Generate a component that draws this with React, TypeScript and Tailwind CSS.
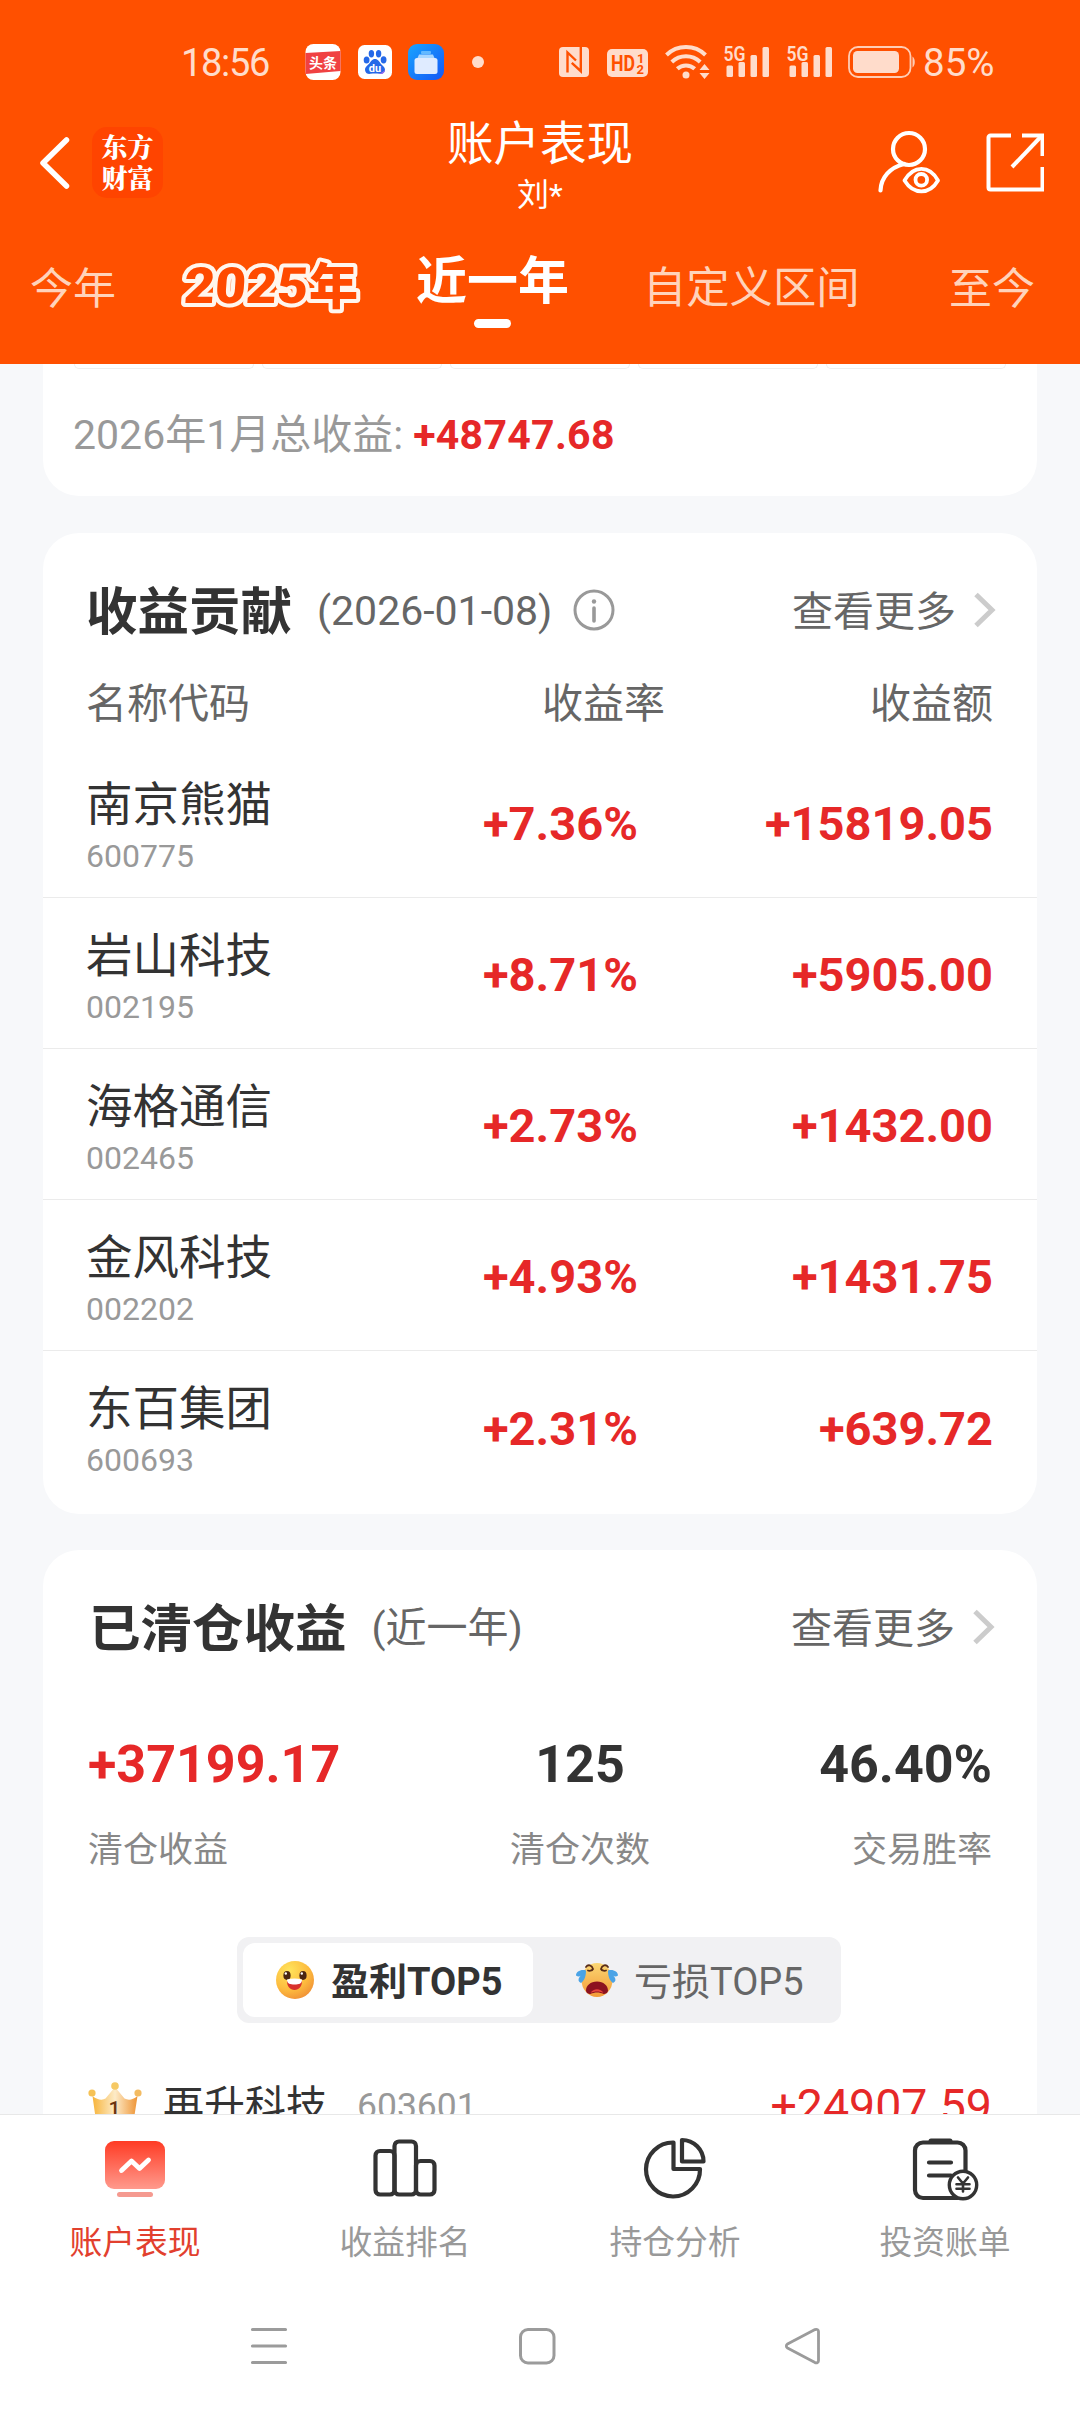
import type { ReactNode } from "react";

const rangeTabs = {
  thisYear: "今年",
  lastYear: "近一年",
  custom: "自定义区间",
  all: "至今",
};

const stocks = [
  { name: "南京熊猫", code: "600775", rate: "+7.36%", amount: "+15819.05" },
  { name: "岩山科技", code: "002195", rate: "+8.71%", amount: "+5905.00" },
  { name: "海格通信", code: "002465", rate: "+2.73%", amount: "+1432.00" },
  { name: "金风科技", code: "002202", rate: "+4.93%", amount: "+1431.75" },
  { name: "东百集团", code: "600693", rate: "+2.31%", amount: "+639.72" },
];

/* ---------- status bar icons ---------- */

function ToutiaoIcon() {
  return (
    <svg width="36" height="36" viewBox="0 0 36 36" className="ml-[36px] shrink-0">
      <rect x="0.5" width="35" height="36" rx="8" fill="#fff" />
      <path d="M0.5 9 35.5 7v20L0.5 30z" fill="#f04142" />
      <text x="18" y="23.5" fontSize="14" fontWeight="700" textAnchor="middle" fill="#fff">
        头条
      </text>
    </svg>
  );
}

function BaiduIcon() {
  return (
    <svg width="34" height="34" viewBox="0 0 34 34" className="ml-[17px] shrink-0">
      <rect width="34" height="34" rx="6.5" fill="#fff" />
      <g fill="#2468e8">
        <ellipse cx="8.6" cy="15" rx="2.9" ry="3.6" />
        <ellipse cx="13.4" cy="8.8" rx="2.7" ry="3.7" />
        <ellipse cx="20.6" cy="8.8" rx="2.7" ry="3.7" />
        <ellipse cx="25.6" cy="14.8" rx="2.9" ry="3.6" />
        <path d="M17 14c3 0 4 2.400 6 5 2 2.400 4.500 3.600 4 6.600-.5 3-3.200 3.600-5.500 3.200-3-.5-6-.5-9 0-2.500.4-5-.6-5.400-3.400-.4-3 1.900-4.400 4-6.600C13 16.500 14 14 17 14z" />
      </g>
      <path d="M20 29c3-1 6-2 7-5 0 4-2.500 5.400-5.500 4.800z" fill="#a06af0" />
      <text x="17" y="27" fontSize="11" fontWeight="700" textAnchor="middle" fill="#fff">
        du
      </text>
    </svg>
  );
}

function FilesIcon() {
  return (
    <svg width="36" height="36" viewBox="0 0 36 36" className="ml-[16px] shrink-0">
      <defs>
        <linearGradient id="files" x1="0" y1="0" x2="1" y2="1">
          <stop offset="0" stopColor="#18a4ff" />
          <stop offset="1" stopColor="#1557f5" />
        </linearGradient>
      </defs>
      <rect width="36" height="36" rx="9" fill="url(#files)" />
      <rect x="13" y="7" width="10" height="3" rx="1" fill="#63b9ff" />
      <path d="M11 10.500h14l1.500 3.500h-17z" fill="#a8d6ff" />
      <rect x="6.500" y="14" width="23" height="16" rx="2.500" fill="#dfebff" />
    </svg>
  );
}

function NfcIcon() {
  return (
    <svg width="30" height="30" viewBox="0 0 30 30" className="shrink-0">
      <rect width="30" height="30" rx="4" fill="#ffdccb" />
      <g fill="none" stroke="#ff5000" strokeWidth="2.400">
        <path d="M8.500 25.500V5.500L17 13.500" />
        <path d="M21.800 0v24.200L12.800 15.800" />
      </g>
    </svg>
  );
}

function HdIcon() {
  return (
    <svg width="41" height="28" viewBox="0 0 41 28" className="ml-[18px] mt-[2px] shrink-0">
      <rect width="41" height="28" rx="5" fill="#ffdccb" />
      <text x="4" y="22" fontSize="22" fontWeight="700" fill="#ff5000" textLength="24" lengthAdjust="spacingAndGlyphs">
        HD
      </text>
      <text x="30" y="13.500" fontSize="13" fontWeight="700" fill="#ff5000">
        1
      </text>
      <text x="29.500" y="25" fontSize="13" fontWeight="700" fill="#ff5000">
        2
      </text>
    </svg>
  );
}

function WifiIcon() {
  return (
    <svg width="46" height="36" viewBox="0 0 46 36" className="ml-[17px] mt-[-2px] shrink-0">
      <g fill="none" stroke="#ffdccb" strokeWidth="4">
        <path d="M1.500 12a28 28 0 0 1 39 0" />
        <path d="M6.800 19a20.500 20.500 0 0 1 28.400 0" />
        <path d="M12.300 25.800a12.800 12.800 0 0 1 17.400 0" />
      </g>
      <circle cx="21" cy="32" r="3.500" fill="#ffdccb" />
      <path d="M34.500 27 39.500 21 44.500 27zM34.500 30 39.500 36 44.500 30z" fill="#ffdccb" />
    </svg>
  );
}

function SignalIcon({ className }: { className: string }) {
  return (
    <svg width="47" height="36" viewBox="0 0 47 36" className={className}>
      <text x="0.500" y="16.500" fontSize="21" fontWeight="600" fill="#ffdccb" textLength="22" lengthAdjust="spacingAndGlyphs">
        5G
      </text>
      <g fill="#ffdccb">
        <rect x="3.500" y="21.500" width="6.500" height="11.500" rx="1.500" />
        <rect x="15.500" y="18" width="6.500" height="15" rx="1.500" />
        <rect x="27.500" y="11" width="6.500" height="22" rx="1.500" />
        <rect x="39.500" y="3" width="6.500" height="30" rx="1.500" />
      </g>
    </svg>
  );
}

function BatteryIcon() {
  return (
    <svg width="68" height="32" viewBox="0 0 68 32" className="ml-[15px] shrink-0">
      <rect x="1" y="1" width="61.500" height="30" rx="9" fill="none" stroke="#ffcdb5" strokeWidth="1.800" />
      <rect x="5" y="5" width="46" height="22" rx="4.500" fill="#ffdccb" />
      <path d="M64.500 10.500c3 2 3 9 0 11z" fill="#ffcdb5" />
    </svg>
  );
}

/* ---------- header ---------- */

function StatusBar() {
  return (
    <div className="flex h-[108px] items-center pt-[16px] text-[#ffdccb]">
      <span className="ml-[181px] w-[88px] pt-[2px] text-[38px] leading-none tracking-[-1.3px]">18:56</span>
      <ToutiaoIcon />
      <BaiduIcon />
      <FilesIcon />
      <span className="ml-[28px] size-[12px] rounded-full bg-[#ffdccb]" />
      <div className="ml-[75px] flex items-center">
        <NfcIcon />
        <HdIcon />
        <WifiIcon />
        <SignalIcon className="ml-[12px] shrink-0" />
        <SignalIcon className="ml-[16px] shrink-0" />
        <BatteryIcon />
        <span className="ml-[7px] pt-[2px] text-[38.500px] leading-none">85%</span>
      </div>
    </div>
  );
}

function NavBar() {
  return (
    <div className="grid h-[111px] grid-cols-[1fr_200px_1fr] text-white">
      <div className="flex items-center pb-[2px] pl-[38px]">
        <svg width="32" height="56" viewBox="0 0 32 56" fill="none" stroke="#fff" strokeWidth="5.500" strokeLinecap="round" strokeLinejoin="round">
          <path d="M28.500 5 5 28l23.500 23" />
        </svg>
        <div className="ml-[22px] flex h-[71px] w-[71px] flex-col items-center justify-center rounded-[15px] bg-[#ff4400] pb-[4px] font-['Noto_Serif_CJK_SC','Noto_Sans_CJK_SC',sans-serif] text-[26px] font-black leading-[31px]">
          <span>东方</span>
          <span>财富</span>
        </div>
      </div>
      <div className="flex flex-col items-center pt-[8px]">
        <h1 className="whitespace-nowrap text-[46.5px] font-normal leading-[56px]">账户表现</h1>
        <span className="text-[32px] leading-[47px]">刘*</span>
      </div>
      <div className="flex items-center justify-end pb-[4px] pr-[36px]">
        <svg width="64" height="64" viewBox="0 0 64 64" fill="none" stroke="#fff" strokeWidth="4.200" strokeLinecap="round" strokeLinejoin="round">
          <circle cx="32" cy="19" r="16" />
          <path d="M27 34C13 37.500 4 47.500 3.500 60.500" />
          <path d="M27.500 50.500c9-15.500 25-15.500 33.500 0-8.500 14.500-24.500 14.500-33.500 0z" strokeWidth="3.800" />
          <circle cx="44.300" cy="49.800" r="5.800" strokeWidth="3.800" />
        </svg>
        <svg width="60" height="60" viewBox="0 0 60 60" fill="none" stroke="#fff" strokeWidth="4" className="ml-[43px]">
          <path d="M27 3.500H6.500a2 2 0 0 0-2 2v50a2 2 0 0 0 2 2H58.500V35" />
          <path d="M38 3.500h20.500V24" />
          <path d="M57.500 4 28 35" />
        </svg>
      </div>
    </div>
  );
}

function RangeTabs() {
  return (
    <div className="flex h-[136px] items-center text-[43px] leading-[60px] text-[#ffd3bb]">
      <span className="ml-[30px] w-[150px] pt-[3px]">{rangeTabs.thisYear}</span>
      <svg width="184" height="60" viewBox="0 0 184 60" className="shrink-0">
        <g fill="#ff4a00" stroke="#fff6ee" strokeWidth="8" strokeLinejoin="round" paintOrder="stroke">
          <text
            transform="translate(3 46) skewX(-4)"
            fontSize="50"
            fontWeight="900"
            textLength="124"
            lengthAdjust="spacingAndGlyphs"
            fontFamily="Roboto"
          >
            2025
          </text>
          <text x="129" y="47" fontSize="49" fontWeight="900">
            年
          </text>
        </g>
      </svg>
      <div className="ml-[52px] flex w-[153px] flex-col items-center gap-[7px] self-start pt-[33px]">
        <span className="text-[51px] font-bold leading-[60px] text-white">{rangeTabs.lastYear}</span>
        <span className="h-[9px] w-[37px] rounded-full bg-white" />
      </div>
      <span className="ml-[74px] w-[306px] pt-[3px] text-[43.300px]">{rangeTabs.custom}</span>
      <span className="pt-[3px]">{rangeTabs.all}</span>
    </div>
  );
}

/* ---------- cards ---------- */

function Card({ className, children }: { className: string; children: ReactNode }) {
  return <section className={`mx-[43px] bg-white ${className}`}>{children}</section>;
}

function MoreLink() {
  return (
    <a className="ml-auto flex items-center text-[41px] leading-[60px] text-[#666]">
      查看更多
      <svg width="24" height="36" viewBox="0 0 24 36" fill="none" stroke="#ccc" strokeWidth="5" className="mb-[4px] ml-[17px]">
        <path d="M3 2.500 19 18 3 33.500" />
      </svg>
    </a>
  );
}

function MonthSummary() {
  return (
    <Card className="h-[132px] shrink-0 rounded-b-[36px]">
      <div className="flex justify-center gap-[8px]">
        {[0, 1, 2, 3, 4].map((i) => (
          <div key={i} className="h-[5px] w-[180px] rounded-b-[8px] border border-t-0 border-[#eeeeee]" />
        ))}
      </div>
      <p className="pl-[30px] pt-[36px] text-[41px] leading-[60px] text-[#999]">
        2026年1月总收益:
        <span className="ml-[10px] font-bold tracking-[0.300px] text-[#e62828]">+48747.68</span>
      </p>
    </Card>
  );
}

function ContributionCard() {
  return (
    <Card className="mt-[37px] h-[981px] shrink-0 rounded-[36px] pt-[48px]">
      <div className="flex h-[62px] items-center pl-[43px] pr-[40px]">
        <h2 className="pt-[1px] text-[51.500px] font-bold leading-[60px] text-[#333]">收益贡献</h2>
        <span className="ml-[25px] text-[41px] text-[#666]">(2026-01-08)</span>
        <svg width="42" height="42" viewBox="0 0 42 42" className="mb-[4px] ml-[21px]">
          <circle cx="21" cy="21" r="19" fill="none" stroke="#999" strokeWidth="3" />
          <circle cx="21" cy="12.500" r="2.200" fill="#999" />
          <path d="M21 19v13" stroke="#999" strokeWidth="3.600" strokeLinecap="round" />
        </svg>
        <MoreLink />
      </div>
      <div className="mt-[31px] flex h-[60px] pl-[43px] pr-[44px] text-[41px] leading-[60px] text-[#666]">
        <span className="flex-1">名称代码</span>
        <span className="w-[123px]">收益率</span>
        <span className="w-[328px] text-right">收益额</span>
      </div>
      <ul className="mt-[13px]">
        {stocks.map((s) => (
          <li
            key={s.code}
            className="flex h-[151px] items-center border-b border-[#ebebeb] pl-[43px] pr-[44px] last:border-b-0"
          >
            <div className="w-[397px] pt-[13px]">
              <p className="text-[46.5px] leading-[54px] text-[#333]">{s.name}</p>
              <p className="text-[32px] leading-[48px] text-[#999]">{s.code}</p>
            </div>
            <span className="pt-[4px] text-[47px] font-bold leading-[56px] text-[#e62828]">{s.rate}</span>
            <span className="ml-auto pt-[4px] text-[47px] font-bold leading-[56px] text-[#e62828]">{s.amount}</span>
          </li>
        ))}
      </ul>
    </Card>
  );
}

function GrinFace() {
  return (
    <svg width="40" height="40" viewBox="0 0 40 40">
      <defs>
        <radialGradient id="grin" cx="0.35" cy="0.25" r="0.85">
          <stop offset="0" stopColor="#ffe45c" />
          <stop offset="0.6" stopColor="#fdbb3e" />
          <stop offset="1" stopColor="#ee8a35" />
        </radialGradient>
      </defs>
      <circle cx="20" cy="20" r="19" fill="url(#grin)" />
      <ellipse cx="12" cy="15.500" rx="3.600" ry="4.400" fill="#4a2512" />
      <ellipse cx="28" cy="15.500" rx="3.600" ry="4.400" fill="#4a2512" />
      <circle cx="10.800" cy="13.500" r="1.200" fill="#fff" />
      <circle cx="26.800" cy="13.500" r="1.200" fill="#fff" />
      <path d="M12 21h15c0 5.500-3 9-7.500 9S12 26.500 12 21z" fill="#d8312b" />
      <path d="M12 19.500c5-1.200 10-1.200 15 0 0 4.500-3.200 5-7.500 5s-7.500-.5-7.500-5z" fill="#fff" />
    </svg>
  );
}

function CryFace() {
  return (
    <svg width="44" height="36" viewBox="0 0 44 36">
      <defs>
        <linearGradient id="cry" x1="0" y1="0" x2="0" y2="1">
          <stop offset="0" stopColor="#fbd774" />
          <stop offset="1" stopColor="#f39a35" />
        </linearGradient>
      </defs>
      <ellipse cx="22" cy="18" rx="15.500" ry="17" fill="url(#cry)" />
      <g fill="#4aa3e6">
        <path d="M11 8.500C6 7 1 9.500 1 13.500c2 1.500 4 1 5 0-3 2.500-3.500 6 0 7.500 3.500-2.500 5-7 5-12.500z" />
        <path d="M33 8.500c5-1.500 10 1 10 5-2 1.500-4 1-5 0 3 2.500 3.500 6 0 7.500-3.500-2.500-5-7-5-12.500z" />
      </g>
      <g fill="none" stroke="#5a2c16" strokeWidth="1.800" strokeLinecap="round">
        <path d="M11 5c2-3 6-2 7 2-1 2-4 2-5 1.500" />
        <path d="M33 5c-2-3-6-2-7 2 1 2 4 2 5 1.500" />
      </g>
      <path d="M22 19.500c6.500 0 11 4 11 9 0 2.500-2.500 3.500-4.500 3.500-4-2-9-2-13 0-2 0-4.500-1-4.500-3.500 0-5 4.500-9 11-9z" fill="#8c1220" />
      <path d="M15.500 31c3-5 10-5 13 0-4-2-9-2-13 0z" fill="#e8453c" />
    </svg>
  );
}

function CrownIcon() {
  return (
    <svg width="54" height="48" viewBox="0 0 54 48" className="shrink-0">
      <defs>
        <linearGradient id="crown" x1="0" y1="0" x2="1" y2="0">
          <stop offset="0" stopColor="#f7b43a" />
          <stop offset="0.5" stopColor="#fdebc8" />
          <stop offset="1" stopColor="#ee9435" />
        </linearGradient>
      </defs>
      <path d="M4.500 14c5 4 10 4.500 13 2.500L27 5l9.500 11.500c4 2 8 1.500 13-2.500l-5 32H9z" fill="url(#crown)" />
      <circle cx="27" cy="4" r="3.800" fill="#f6c964" />
      <circle cx="4" cy="11" r="3.600" fill="#f6c255" />
      <circle cx="50" cy="11" r="3.600" fill="#f3bb62" />
      <text x="26.500" y="34" fontSize="21" fontWeight="500" textAnchor="middle" fill="#6b3410">
        1
      </text>
    </svg>
  );
}

function ClosedCard() {
  return (
    <Card className="mt-[36px] h-[700px] shrink-0 rounded-t-[36px] pt-[49px]">
      <div className="flex h-[60px] items-center pl-[46px] pr-[41px]">
        <h2 className="pt-[2px] text-[51.500px] font-bold leading-[60px] text-[#333]">已清仓收益</h2>
        <span className="ml-[25px] text-[41px] text-[#666]">(近一年)</span>
        <MoreLink />
      </div>
      <div className="mt-[76px] grid grid-cols-[1fr_auto_1fr] px-[45px]">
        <div>
          <p className="text-[52px] font-bold leading-[60px] text-[#e62828]">+37199.17</p>
          <p className="mt-[30px] text-[35px] leading-[52px] text-[#888]">清仓收益</p>
        </div>
        <div className="ml-[80px] text-center">
          <p className="text-[52px] font-bold leading-[60px] text-[#333]">125</p>
          <p className="mt-[30px] text-[35px] leading-[52px] text-[#888]">清仓次数</p>
        </div>
        <div className="text-right">
          <p className="text-[52px] font-bold leading-[60px] text-[#333]">46.40%</p>
          <p className="mt-[30px] text-[35px] leading-[52px] text-[#888]">交易胜率</p>
        </div>
      </div>
      <div className="ml-[194px] mt-[60px] flex h-[86px] w-[604px] rounded-[12px] bg-[#f1f1f3] p-[6px] text-[38px]">
        <div className="flex w-[290px] items-center rounded-[12px] bg-white pl-[32px] font-bold text-[#333]">
          <GrinFace />
          <span className="ml-[16px] pt-[4px]">盈利TOP5</span>
        </div>
        <div className="flex flex-1 items-center pl-[42px] text-[#666]">
          <CryFace />
          <span className="ml-[15px] pt-[4px]">亏损TOP5</span>
        </div>
      </div>
      <div className="mt-[52px] flex h-[64px] items-center pl-[45px] pr-[45px] text-[#333]">
        <div className="pb-[2px]">
          <CrownIcon />
        </div>
        <span className="ml-[21px] text-[41px]">再升科技</span>
        <span className="ml-[30px] text-[35.500px] text-[#999]">603601</span>
        <span className="ml-auto text-[46.500px] text-[#e62828]">+24907.59</span>
      </div>
    </Card>
  );
}

/* ---------- bottom bars ---------- */

function AccountIcon() {
  return (
    <svg width="68" height="66" viewBox="0 0 68 66">
      <defs>
        <linearGradient id="acct" x1="0" y1="0" x2="0" y2="1">
          <stop offset="0" stopColor="#ff3b24" />
          <stop offset="1" stopColor="#ff9a8d" />
        </linearGradient>
      </defs>
      <rect x="4" y="5" width="60" height="48" rx="9" fill="url(#acct)" />
      <path d="M20.500 34.500 30.500 25l8 7.500 9-8.500" fill="none" stroke="#fff" strokeWidth="4.800" strokeLinecap="round" strokeLinejoin="round" />
      <rect x="16" y="56" width="36" height="5" rx="2.500" fill="#f59a90" />
    </svg>
  );
}

function RankIcon() {
  return (
    <svg width="68" height="66" viewBox="0 0 68 66" fill="none" stroke="#333" strokeWidth="4.200">
      <rect x="4.500" y="15" width="19" height="43.500" rx="4.500" />
      <rect x="23.500" y="5.500" width="21.500" height="53" rx="4.500" />
      <rect x="45" y="25" width="18.500" height="33.500" rx="4.500" />
    </svg>
  );
}

function PieIcon() {
  return (
    <svg width="68" height="66" viewBox="0 0 68 66" fill="none" stroke="#333" strokeWidth="4.200" strokeLinejoin="round">
      <path d="M32.500 6.500A27 27 0 1 0 59 33H32.500z" />
      <path d="M41 4A21.500 21.500 0 0 1 62.500 25.500H41z" />
    </svg>
  );
}

function BillIcon() {
  return (
    <svg width="68" height="66" viewBox="0 0 68 66" fill="none" stroke="#333" strokeWidth="4.200" strokeLinecap="round">
      <rect x="4" y="6.500" width="50.500" height="55.500" rx="8" />
      <rect x="17.500" y="2.500" width="24" height="5" rx="2.500" fill="#333" stroke="none" />
      <path d="M18 26.500h22M18 39.500h22" />
      <circle cx="52" cy="49" r="13.700" fill="#fff" strokeWidth="3.400" />
      <path d="M47 41.500l5 6 5-6M52 47.500v8M45.500 48.200h13M45.500 52.800h13" strokeWidth="2.600" />
    </svg>
  );
}

const bottomTabs = [
  { label: "账户表现", icon: <AccountIcon />, active: true },
  { label: "收益排名", icon: <RankIcon />, active: false },
  { label: "持仓分析", icon: <PieIcon />, active: false },
  { label: "投资账单", icon: <BillIcon />, active: false },
];

function BottomBar() {
  return (
    <footer className="h-[298px] shrink-0 border-t border-[#e8e8e8] bg-white">
      <div className="grid grid-cols-4 pt-[21px]">
        {bottomTabs.map((t) => (
          <div key={t.label} className="flex flex-col items-center">
            {t.icon}
            <span
              className={
                t.active
                  ? "mt-[17px] text-[32.800px] leading-[48px] text-[#e2402e]"
                  : "mt-[17px] text-[32.800px] leading-[48px] text-[#999]"
              }
            >
              {t.label}
            </span>
          </div>
        ))}
      </div>
      <div className="mt-[59px] flex items-center pl-[249px]">
        <svg width="40" height="40" viewBox="0 0 40 40" stroke="#9b9b9b" strokeWidth="3.200" strokeLinecap="round">
          <path d="M3.500 3.500h33M3.500 20h33M3.500 36.500h33" />
        </svg>
        <svg width="40" height="40" viewBox="0 0 40 40" fill="none" stroke="#9b9b9b" strokeWidth="3" className="ml-[228px]">
          <rect x="3.500" y="3.500" width="33.500" height="33.500" rx="7.500" />
        </svg>
        <svg width="40" height="40" viewBox="0 0 40 40" fill="none" stroke="#9b9b9b" strokeWidth="2.800" strokeLinejoin="round" className="ml-[226px]">
          <path d="M4.500 18 32 3.600c2-.8 3.500.2 3.500 2v29c0 1.800-1.500 2.800-3.500 2L4.500 22c-1.600-1-1.600-3 0-4z" />
        </svg>
      </div>
    </footer>
  );
}

export default function App() {
  return (
    <div
      lang="zh-CN"
      className="flex h-[2412px] w-[1080px] flex-col overflow-hidden bg-[#f7f8fa] font-[Roboto,'Noto_Sans_CJK_SC',sans-serif]"
    >
      <header className="h-[364px] shrink-0 bg-[#ff5000]">
        <StatusBar />
        <NavBar />
        <RangeTabs />
      </header>
      <main className="flex h-[1750px] shrink-0 flex-col overflow-hidden">
        <MonthSummary />
        <ContributionCard />
        <ClosedCard />
      </main>
      <BottomBar />
    </div>
  );
}
